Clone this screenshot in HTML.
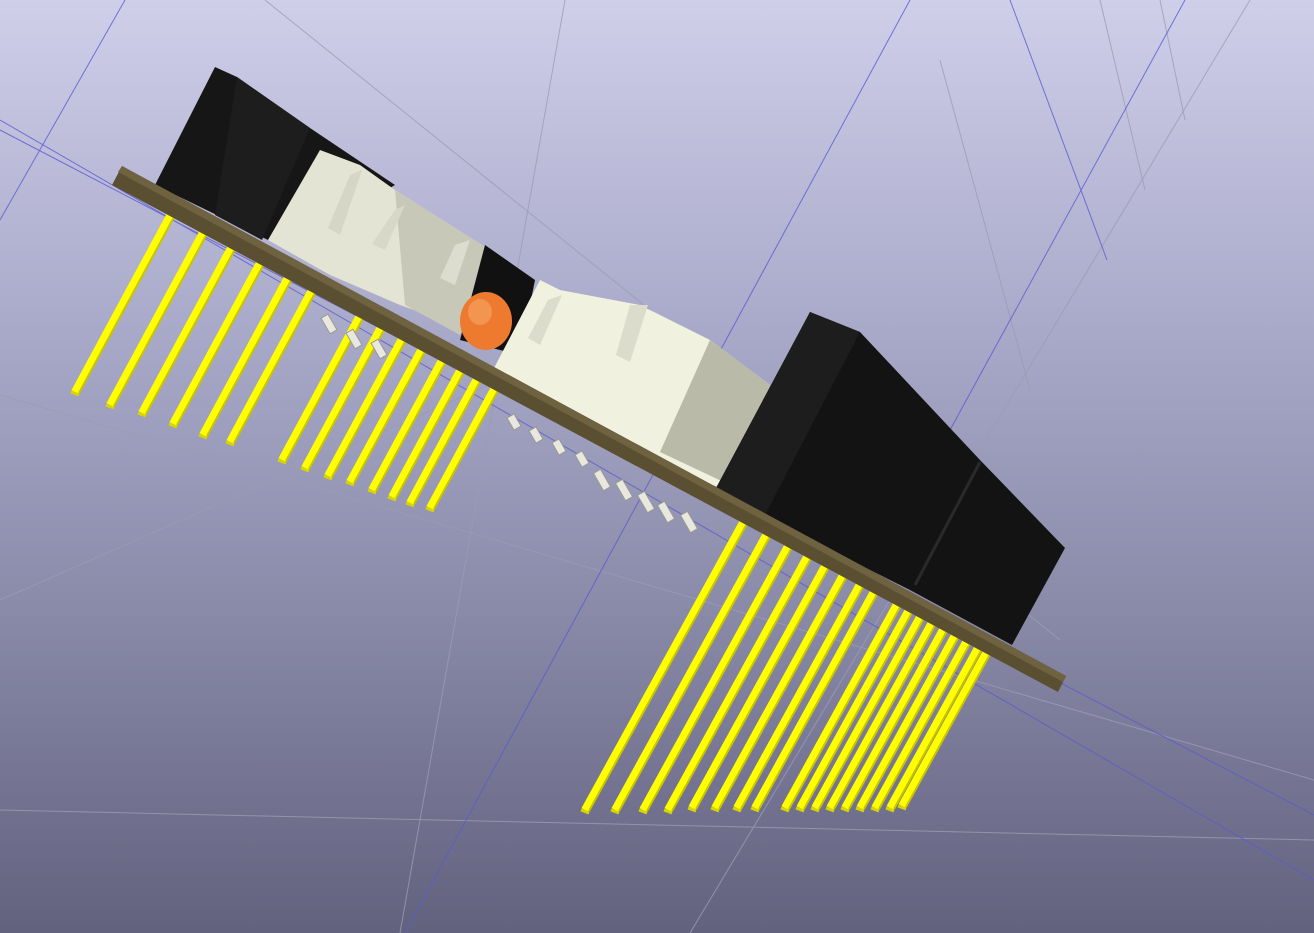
<!DOCTYPE html>
<html><head><meta charset="utf-8"><style>
html,body{margin:0;padding:0;width:1314px;height:933px;overflow:hidden}
body{background:linear-gradient(#cfcfea 0%,#a9a9c9 35%,#8a8aa9 65%,#62627f 100%)}
svg{position:absolute;left:0;top:0}
</style></head><body>
<svg id="s" width="1314" height="933" viewBox="0 0 1314 933">
<g stroke="#9c9cb4" stroke-width="1" fill="none" opacity="0.8">
<line x1="265" y1="0" x2="1060" y2="640"/>
<line x1="565" y1="0" x2="400" y2="933"/>
<line x1="0" y1="395" x2="1314" y2="780"/>
<line x1="0" y1="810" x2="1314" y2="840"/>
<line x1="1250" y1="0" x2="690" y2="933"/>
<line x1="1100" y1="0" x2="1145" y2="190"/>
<line x1="1160" y1="0" x2="1185" y2="120"/>
<line x1="940" y1="60" x2="1030" y2="390"/>
<line x1="0" y1="600" x2="500" y2="380"/>
</g>
<g stroke="#5a5ad0" stroke-width="1" fill="none" opacity="0.8">
<line x1="0" y1="220" x2="125" y2="0"/>
<line x1="1010" y1="0" x2="1107" y2="260"/>
<line x1="405" y1="933" x2="910" y2="0"/>
<line x1="0" y1="120" x2="1314" y2="880"/>
<line x1="0" y1="130" x2="1314" y2="815"/>
<line x1="1185" y1="0" x2="950" y2="430"/>
</g>
<g id="pins"></g>
<!-- small white pins -->
<g fill="#e8e8e0" stroke="#9a9a90" stroke-width="1">
<rect x="325" y="315" width="8" height="18" transform="rotate(-30 329 324)"/>
<rect x="350" y="330" width="8" height="18" transform="rotate(-30 354 339)"/>
<rect x="375" y="340" width="8" height="18" transform="rotate(-30 379 349)"/>
<rect x="510" y="415" width="8" height="14" transform="rotate(-30 514 422)"/>
<rect x="532" y="428" width="8" height="14" transform="rotate(-30 536 435)"/>
<rect x="555" y="440" width="8" height="14" transform="rotate(-30 559 447)"/>
<rect x="578" y="452" width="8" height="14" transform="rotate(-30 582 459)"/>
<rect x="598" y="470" width="8" height="20" transform="rotate(-30 602 480)"/>
<rect x="620" y="480" width="8" height="20" transform="rotate(-30 624 490)"/>
<rect x="642" y="492" width="8" height="20" transform="rotate(-30 646 502)"/>
<rect x="662" y="502" width="8" height="20" transform="rotate(-30 666 512)"/>
<rect x="685" y="512" width="8" height="20" transform="rotate(-30 689 522)"/>
</g>
<!-- left black connector -->
<polygon points="215,67 237,77 310,128 395,185 300,240 268,240 155,185" fill="#161616"/>
<polygon points="237,77 310,128 262,240 215,215" fill="#1d1d1d"/>
<!-- left cream connector -->
<polygon points="320,150 360,165 395,190 490,250 470,330 400,305 330,275 268,240" fill="#e4e4d4"/>
<polygon points="395,190 490,250 460,335 405,305" fill="#c8c8b8"/>
<polygon points="350,175 362,170 340,235 328,228" fill="#d6d6c6"/>
<polygon points="395,210 405,205 385,250 372,244" fill="#d8d8c8"/>
<polygon points="455,245 470,240 455,285 440,278" fill="#ddddcf"/>
<!-- small black -->
<polygon points="485,245 535,280 520,355 460,340" fill="#111"/>
<ellipse cx="486" cy="321" rx="26" ry="29" fill="#ee7a30"/>
<ellipse cx="480" cy="312" rx="12" ry="13" fill="#f7a060" opacity="0.7"/>
<!-- right cream connector -->
<polygon points="540,280 560,290 640,305 710,340 770,385 725,490 600,440 492,372" fill="#f1f1e0"/>
<polygon points="710,340 770,385 730,485 660,452" fill="#babaa8"/>
<polygon points="548,300 562,295 540,345 528,338" fill="#dcdccc"/>
<polygon points="630,305 648,305 630,362 616,355" fill="#dcdccc"/>
<!-- right black block -->
<polygon points="810,312 860,332 980,460 1065,548 1012,645 910,590 760,515 715,490" fill="#131313"/>
<polygon points="810,312 860,332 765,515 715,490" fill="#1d1d1d"/>
<line x1="980" y1="462" x2="915" y2="585" stroke="#2a2a2a" stroke-width="3"/>
<!-- board -->
<polygon points="122,166 1066,676 1058,692 112,185" fill="#5a4f30"/>
<polygon points="122,166 1066,676 1063,682 118,172" fill="#6e6240"/>
<g id="pins2"></g>
</svg>
<script>
var NS="http://www.w3.org/2000/svg";
function pin(g,bx,by,k,slope){
  // board bottom line y=185+0.536(x-112)
  var t=(by-185-0.536*(bx-112))/(1+0.536*slope);
  var tx=bx+slope*t, ty=by-t;
  var l=document.createElementNS(NS,"line");
  l.setAttribute("x1",bx);l.setAttribute("y1",by);l.setAttribute("x2",tx);l.setAttribute("y2",ty);
  l.setAttribute("stroke","#ffff00");l.setAttribute("stroke-width","8");
  g.appendChild(l);
  var d=document.createElementNS(NS,"line");
  d.setAttribute("x1",bx+4);d.setAttribute("y1",by+1);d.setAttribute("x2",tx+4);d.setAttribute("y2",ty+1);
  d.setAttribute("stroke","#c8c400");d.setAttribute("stroke-width","2");
  g.appendChild(d);
  var c=document.createElementNS(NS,"line");
  c.setAttribute("x1",bx-4);c.setAttribute("y1",by);c.setAttribute("x2",bx+4);c.setAttribute("y2",by+3);
  c.setAttribute("stroke","#d8d400");c.setAttribute("stroke-width","3");
  g.appendChild(c);
}
var g=document.getElementById("pins");
[[75,392],[110,405],[142,413],[173,424],[203,435],[230,442]].forEach(function(p){pin(g,p[0],p[1],0,0.54)});
[[282,460],[305,468],[328,476],[350,482],[372,490],[392,497],[410,503],[430,508]].forEach(function(p){pin(g,p[0],p[1],0,0.54)});
[[585,810],[615,810],[643,810],[668,810],[692,808],[715,808],[737,808],[755,808],[785,808],[800,808],[815,808],[830,808],[845,808],[860,808],[875,808],[890,808],[902,806]].forEach(function(p){pin(g,p[0],p[1],0,0.55)});
</script>
</body></html>
